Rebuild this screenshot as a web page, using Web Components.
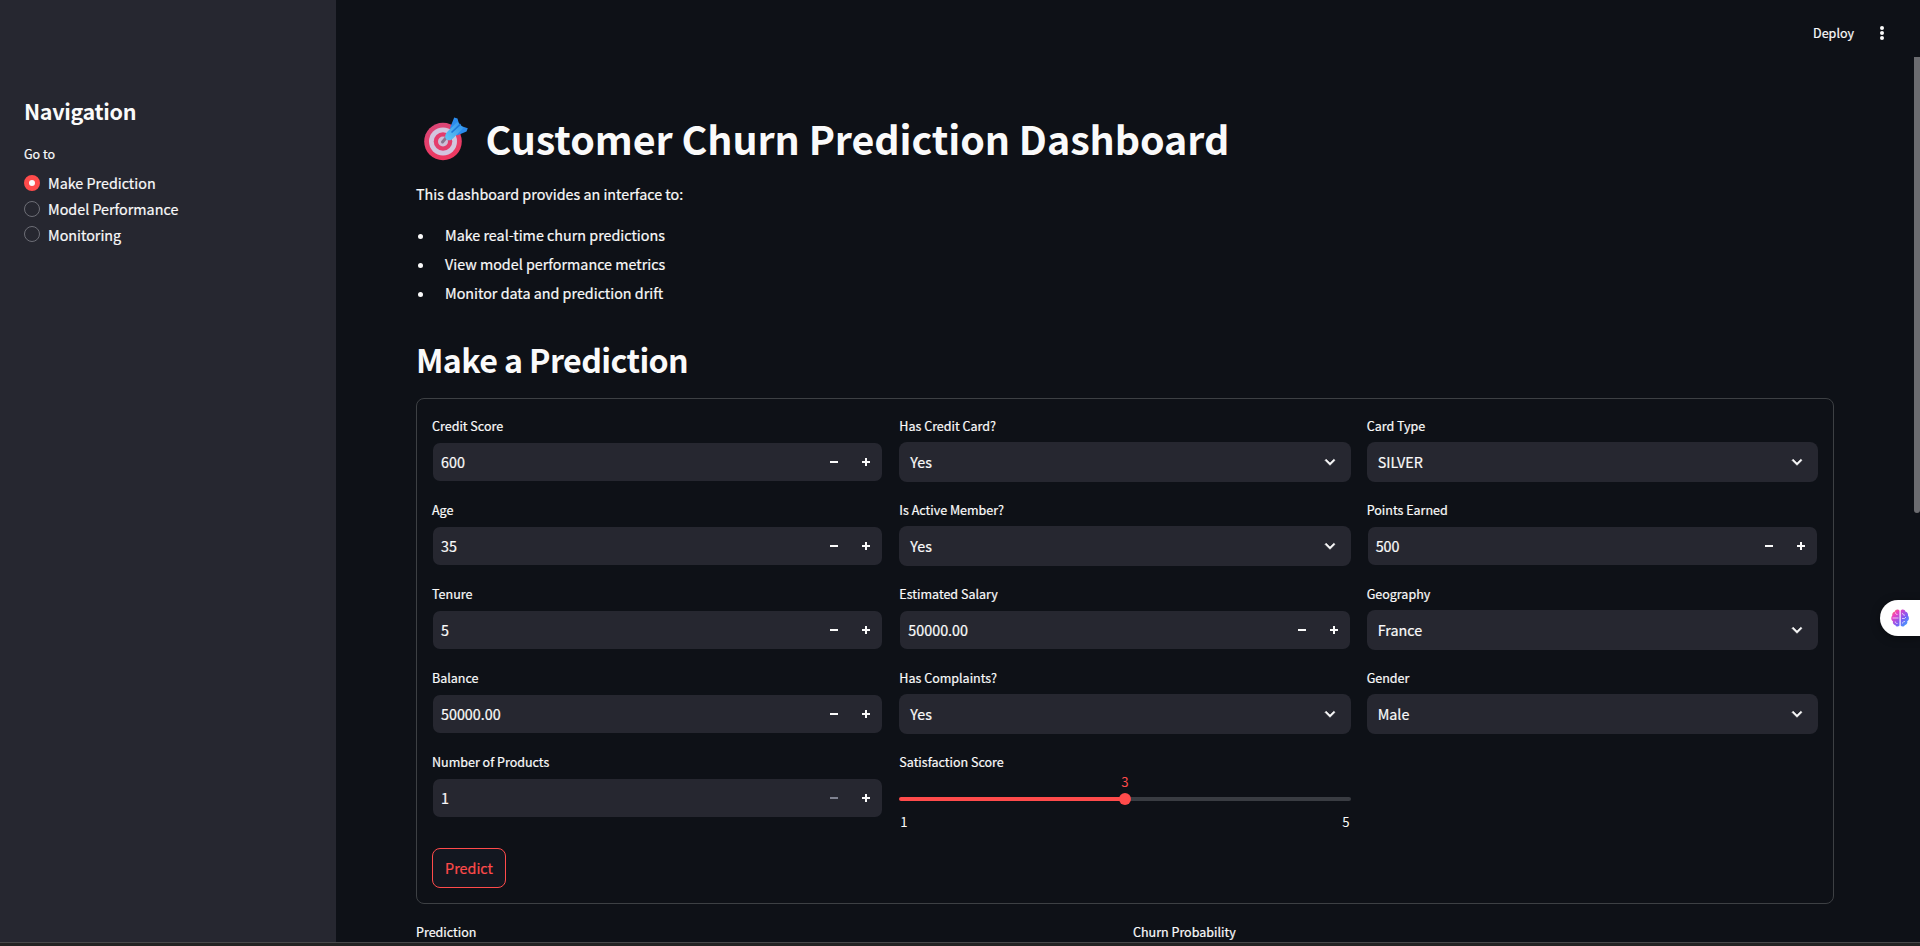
<!DOCTYPE html>
<html lang="en">
<head>
<meta charset="utf-8">
<title>Customer Churn Prediction Dashboard</title>
<style>
html,body{margin:0;height:100%;background:#0e1117;overflow:hidden}
body{font-family:"Noto Sans CJK JP","Noto Sans CJK SC",sans-serif;font-size:14.33px;color:#fafafa;line-height:1.6;-webkit-text-stroke:.2px currentColor}
</style>
</head>
<body>
<churn-app></churn-app>
<script>
function define(name, html, setup){
  const t=document.createElement('template'); t.innerHTML=html;
  customElements.define(name, class extends HTMLElement{
    connectedCallback(){
      if(this.shadowRoot) return;
      const r=this.attachShadow({mode:'open'});
      r.append(t.content.cloneNode(true));
      if(setup) setup(this,r);
    }
  });
}

define('field-label', `<style>
:host{display:flex;align-items:center;height:24px;margin-bottom:4px;font-size:12.53px;line-height:24px;white-space:nowrap}
</style><slot></slot>`);

define('number-field', `<style>
:host{display:block;height:68px}
.box{display:flex;align-items:center;height:38px;margin:0 1px;background:#262730;border-radius:7px}
.wrap{padding:1px 0}
.val{flex:1;padding-left:8px;line-height:38px}
.step{width:32px;height:38px;display:flex;align-items:center;justify-content:center}
svg{width:8px;height:8px;fill:currentColor;display:block}
:host([at-min]) .minus{color:#7f8290}
</style><field-label></field-label><div class="wrap"><div class="box"><span class="val"><slot></slot></span>
<span class="step minus"><svg viewBox="0 0 8 8"><path d="M0 3v2h8v-2z"/></svg></span>
<span class="step"><svg viewBox="0 0 8 8"><path d="M3 0v3h-3v2h3v3h2v-3h3v-2h-3v-3z"/></svg></span></div></div>`,
(h,r)=>{r.querySelector('field-label').textContent=h.getAttribute('label')});

define('select-field', `<style>
:host{display:block;height:68px}
.box{display:flex;align-items:center;justify-content:space-between;height:40px;background:#262730;border-radius:8px;padding:0 11px;box-sizing:border-box}
svg{width:20px;height:20px;fill:currentColor;stroke:currentColor;stroke-width:.7;display:block}
</style><field-label></field-label><div class="box"><span><slot></slot></span>
<svg viewBox="0 0 24 24"><path d="M16.59 8.59 12 13.17 7.41 8.59 6 10l6 6 6-6z"/></svg></div>`,
(h,r)=>{r.querySelector('field-label').textContent=h.getAttribute('label')});

define('slider-field', `<style>
:host{display:block;height:82px;font-size:14px}
.body{display:grid;grid-template-rows:19px 14px 22px;margin-top:-5px;font-size:13.2px;-webkit-text-stroke:0}
.now{justify-self:center;line-height:18px;color:#ff4b4b}
.bar{display:flex;align-items:center}
.on,.off{height:4px;flex:1}
.on{background:#ff4b4b;border-radius:4px 0 0 4px;margin-right:-6px}
.off{background:#393c42;border-radius:0 4px 4px 0;margin-left:-6px}
.thumb{width:12px;height:12px;border-radius:50%;background:#ff4b4b;z-index:1}
.ends{display:flex;justify-content:space-between;padding:5px 1px 0;line-height:22px}
</style><field-label></field-label><div class="body"><span class="now"></span>
<div class="bar"><span class="on"></span><span class="thumb"></span><span class="off"></span></div>
<div class="ends"><span class="lo"></span><span class="hi"></span></div></div>`,
(h,r)=>{r.querySelector('field-label').textContent=h.getAttribute('label');
for(const k of ['now','lo','hi']) r.querySelector('.'+k).textContent=h.getAttribute(k)});

define('radio-item', `<style>
:host{display:flex;align-items:center;height:25.8px;gap:8px;line-height:25.8px}
i{box-sizing:border-box;width:16px;height:16px;border-radius:50%;border:1px solid #6d6e76;background:#262730}
:host([checked]) i{border:5px solid #ff4b4b;background:#fafafa}
</style><i></i><slot></slot>`);

define('side-bar', `<style>
:host{display:block;box-sizing:border-box;width:336px;height:100%;background:#262730;padding:96px 24px 0}
h2{margin:0;font-size:21.5px;line-height:29px;font-weight:700;letter-spacing:-.3px;-webkit-text-stroke:0}
.go{font-size:12.53px;line-height:24px;margin:17px 0 4px}
</style><h2>Navigation</h2><div class="go">Go to</div>
<radio-item checked>Make Prediction</radio-item><radio-item>Model Performance</radio-item><radio-item>Monitoring</radio-item>`);

define('target-icon', `<style>:host{display:block;width:44px;height:44px}svg{display:block}</style>
<svg width="44" height="44" viewBox="0 0 44 44">
<defs><linearGradient id="r" x1="0" y1="0" x2=".3" y2="1"><stop offset="0" stop-color="#d9487a"/><stop offset="1" stop-color="#ee3860"/></linearGradient>
<linearGradient id="b" x1="0" y1="1" x2="1" y2="0"><stop offset="0" stop-color="#62c8f5"/><stop offset="1" stop-color="#2f90ea"/></linearGradient></defs>
<circle cx="19" cy="24.5" r="18.8" fill="url(#r)"/><circle cx="19" cy="24.5" r="14" fill="#d3c5de"/><circle cx="19" cy="24.5" r="9.3" fill="#e53c6c"/><circle cx="19" cy="24.5" r="5" fill="#cdc0d8"/>
<path d="M18.5 25 24 18.5" stroke="#8a7590" stroke-width="3" stroke-linecap="round"/>
<path d="M26 11 30.200 0.500 33.500 1.500 35.500 8.500 43.800 11.300 42.500 14.500 33 18.500z" fill="#2b8bec"/>
<path d="M21.200 19.500c0-2 1-3.700 2.600-5.300L33.500 4.800 39.500 10.800 29 21.400c-2 2-4.400 2.400-6.200 1.300-1-.8-1.600-1.800-1.600-3.200z" fill="url(#b)"/>
<path d="M27.500 15.500 36.500 7.200" stroke="#1e78d8" stroke-width="1.600"/></svg>`);

define('top-bar', `<style>
:host{display:flex;justify-content:flex-end;align-items:center;height:66px;padding-right:35px;font-size:12.53px;gap:25px}
svg{display:block}
</style><span>Deploy</span><svg width="6" height="16" viewBox="0 0 6 16" fill="#fafafa"><circle cx="3" cy="3" r="2"/><circle cx="3" cy="8" r="2"/><circle cx="3" cy="13" r="2"/></svg>`);

define('prediction-form', `<style>
:host{display:block;box-sizing:border-box;height:506px;border:1px solid #3d4044;border-radius:8px;padding:15px}
.cols{display:grid;grid-template-columns:repeat(3,1fr);column-gap:16px;height:418px}
.col{display:flex;flex-direction:column;gap:16px}
button{display:block;box-sizing:border-box;height:40px;width:74px;padding:0;margin-top:16px;border:1px solid #ff4b4b;border-radius:8px;background:#131720;color:#ff4b4b;font:inherit;line-height:36px}
</style><div class="cols">
<div class="col"><number-field label="Credit Score">600</number-field><number-field label="Age">35</number-field><number-field label="Tenure">5</number-field><number-field label="Balance">50000.00</number-field><number-field label="Number of Products" at-min>1</number-field></div>
<div class="col"><select-field label="Has Credit Card?">Yes</select-field><select-field label="Is Active Member?">Yes</select-field><number-field label="Estimated Salary">50000.00</number-field><select-field label="Has Complaints?">Yes</select-field><slider-field label="Satisfaction Score" now="3" lo="1" hi="5"></slider-field></div>
<div class="col"><select-field label="Card Type">SILVER</select-field><number-field label="Points Earned">500</number-field><select-field label="Geography">France</select-field><select-field label="Gender">Male</select-field></div>
</div><button>Predict</button>`);

define('brain-tab', `<style>
:host{position:absolute;right:0;top:600px;width:40px;height:36px;background:#fff;border-radius:18px 0 0 18px;display:flex;align-items:center;box-shadow:0 2px 10px rgba(0,0,0,.4)}
svg{display:block;margin-left:11px}
</style><svg width="18" height="18" viewBox="0 0 18 18"><defs><linearGradient id="g" x1="0" y1="0" x2="1" y2="1"><stop offset="0" stop-color="#ff9a3c"/><stop offset=".25" stop-color="#f03fc0"/><stop offset=".6" stop-color="#7c5cf5"/><stop offset="1" stop-color="#2fb4ff"/></linearGradient></defs>
<path fill="url(#g)" d="M8.500 1.500v15c-1 1.600-3.600 1.300-4.200-.5C2.500 15.800 1.400 14 2 12.300 0 11.300-.3 8 1.300 6.600.8 4.700 1.900 3 3.700 2.700 4.200-.1 7.500-.2 8.500 1.500zM9.700 1.500c1-1.700 4.300-1.600 4.800 1.200 1.800.3 2.900 2 2.400 3.900 1.600 1.400 1.300 4.700-.7 5.700.6 1.700-.5 3.500-2.300 3.700-.6 1.800-3.200 2.100-4.200.5z"/>
<path fill="none" stroke="#fff" stroke-width=".9" stroke-opacity=".75" d="M1.500 9h6M4.500 3.500c0 1.500.8 2 2 2M4.200 12.500c0 1.500 1 2 2.300 2M11.500 4c0 1.500 1 2.200 2.500 2.200M11 9.500h2.500l1.500-1.500M11.500 14.500c0-1.500 1-2 2.500-2"/></svg>`);

define('churn-app', `<style>
:host{display:block;position:relative;height:946px;overflow:hidden}
.page{display:grid;grid-template-columns:336px 1fr;height:942px;overflow:hidden}
main{min-width:0}
.content{padding:44px 86px 0 80px}
.title{display:flex;padding-left:8px;height:53px}
target-icon{margin:7px 17.500px 0 0}
h1{margin:.5px 0 0;font-size:39.4px;line-height:53px;font-weight:700;letter-spacing:-.06px;white-space:nowrap;-webkit-text-stroke:0}
p{margin:18px 0 15px;line-height:26px}
ul{margin:0;padding:0;list-style:none}
li{display:flex;align-items:center;height:26px;line-height:26px}
li+li{margin-top:3px}
li::before{content:"";width:5px;height:5px;border-radius:50%;background:#fafafa;margin:3px 22px 0 2px}
h2{margin:32px 0 17px;font-size:32.200px;line-height:43px;font-weight:700;letter-spacing:-.6px;-webkit-text-stroke:0}
.metrics{display:grid;grid-template-columns:1fr 1fr;column-gap:16px;margin-top:17px;font-size:12.530px;line-height:22.400px}
.thumb{position:absolute;right:0;top:57px;width:6px;height:456px;background:#6b6c70;border-radius:0 0 3px 3px}
.edge{height:3px;border-top:1px solid #48484a;background:#232323}
</style><div class="page"><side-bar></side-bar><main><top-bar></top-bar><div class="content">
<div class="title"><target-icon></target-icon><h1>Customer Churn Prediction Dashboard</h1></div>
<p>This dashboard provides an interface to:</p>
<ul><li>Make real-time churn predictions</li><li>View model performance metrics</li><li>Monitor data and prediction drift</li></ul>
<h2>Make a Prediction</h2>
<prediction-form></prediction-form>
<div class="metrics"><span>Prediction</span><span>Churn Probability</span></div>
</div></main></div><div class="edge"></div><div class="thumb"></div><brain-tab></brain-tab>`);
</script>
</body>
</html>
